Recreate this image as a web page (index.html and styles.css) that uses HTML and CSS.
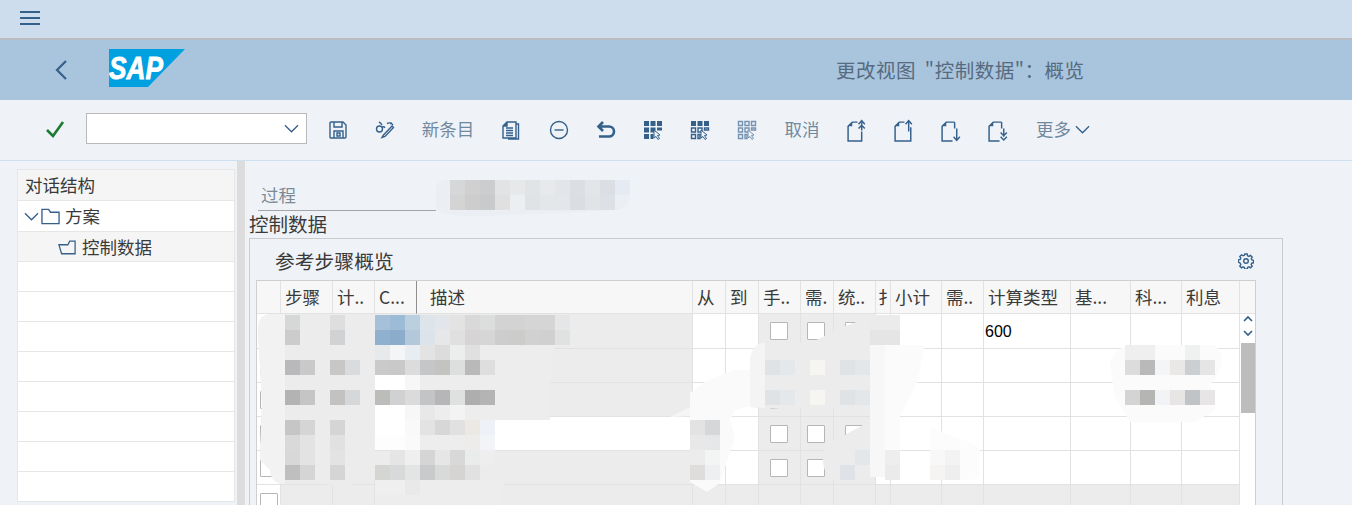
FILE: index.html
```html
<!DOCTYPE html>
<html lang="zh-CN">
<head>
    <meta charset="UTF-8">
    <meta name="viewport" content="width=device-width, initial-scale=1.0">
    <title>更改视图</title>
    <link rel="stylesheet" href="styles.css">
</head>
<body>
    <div class="topbar">
        <svg class="menu-icon" viewBox="0 0 20 14"><path d="M0 1h20M0 7h20M0 13h20"/></svg>
    </div>

    <div class="shell">
        <svg class="back-icon" viewBox="0 0 12 20"><path d="M11 1L2 10l9 9"/></svg>
        <svg class="sap-logo" viewBox="0 0 76 38">
            <polygon points="0,0 76,0 39,38 0,38"/>
            <text x="0" y="30" textLength="54" lengthAdjust="spacingAndGlyphs">SAP</text>
        </svg>
        <div class="shell-title">更改视图 "控制数据"：概览</div>
    </div>

    <div class="toolbar">
        <svg class="check-icon" viewBox="0 0 20 18"><path d="M2 9l6 6L18 1"/></svg>
        <div class="cmd-box">
            <svg class="chevron" viewBox="0 0 16 9"><path d="M1 1l7 7 7-7"/></svg>
        </div>
        <div class="tools">
            <span class="tool"><svg viewBox="0 0 20 20"><path d="M3 2h12l3 3v12a1 1 0 0 1-1 1H3a1 1 0 0 1-1-1V3a1 1 0 0 1 1-1zM6 2v5h8V2M6 18v-7h9v7M9 13h3v3H9z"/></svg></span>
            <span class="tool"><svg viewBox="0 0 20 20"><circle cx="4.5" cy="9" r="3"/><path d="M7 7.5c1-1 2-1 3 .2M7 5C6 3 5 2.500 4 2M8.500 15L17 6l1.500 1.500-8.500 9-3 1zM15 4l1-1 2 2M12 3.500c2-1 3-1 5 0"/></svg></span>
            <span class="tool tool-text wide">新条目</span>
            <span class="tool"><svg viewBox="0 0 20 20"><path d="M1 6l4-4h9v16H1zM1 6h4V2M4 8h7M4 10.500h7M4 13h7M4 15.500h7M14 4h2.500v15H6"/><path class="solid" d="M1 6l4-4v4z"/></svg></span>
            <span class="tool"><svg viewBox="0 0 20 20"><circle cx="10" cy="10" r="8.500"/><path d="M5.500 10h9"/></svg></span>
            <span class="tool"><svg viewBox="0 0 20 20"><path class="thick" d="M7 2L2.500 6.500 7 11M3 6.500h10a4.500 4.500 0 0 1 0 10H3"/></svg></span>
            <span class="tool"><svg viewBox="0 0 20 20">
                <path class="solid" d="M1 1h5v5H1zM7.500 1h5v5h-5zM14 1h5v5h-5zM1 7.500h5v5H1zM7.500 7.500h5v5h-5zM14 7.500h5v3h-5zM1 14h5v5H1zM7.500 14h3v5h-3z"/>
                <path class="cursor" d="M11 10l6 5-2.500.5 2 3-1.500 1-2-3-2 1.500z"/>
            </svg></span>
            <span class="tool"><svg viewBox="0 0 20 20">
                <path class="solid" d="M1 1h5v5H1zM7.500 1h5v5h-5zM14 1h5v5h-5z"/>
                <path d="M1.500 8h4v4h-4zM8 8h4v4H8zM14.500 8h4v2h-4zM1.500 14.500h4v4h-4zM8 14.500h2v4H8z"/>
                <path class="cursor" d="M11 10l6 5-2.500.5 2 3-1.500 1-2-3-2 1.500z"/>
            </svg></span>
            <span class="tool faint"><svg viewBox="0 0 20 20">
                <path d="M1.500 1.500h4v4h-4zM8 1.500h4v4H8zM14.500 1.500h4v4h-4zM1.500 8h4v4h-4zM8 8h4v4H8zM14.500 8h4v2h-4zM1.500 14.500h4v4h-4zM8 14.500h2v4H8z"/>
                <path class="cursor" d="M11 10l6 5-2.500.5 2 3-1.500 1-2-3-2 1.500z"/>
            </svg></span>
            <span class="tool tool-text">取消</span>
            <span class="tool"><svg class="page" viewBox="0 0 22 22"><path d="M11 3H6L2 7v14h13v-9"/><path class="solid" d="M2 7l4-4v4z"/><path d="M15 11V3M12 5l3-3.500L18 5M12 9l3-3 3 3"/></svg></span>
            <span class="tool"><svg class="page" viewBox="0 0 22 22"><path d="M11 3H6L2 7v14h15V8"/><path class="solid" d="M2 7l4-4v4z"/><path d="M15 12V2M12 5l3-3.500L18 5"/></svg></span>
            <span class="tool"><svg class="page" viewBox="0 0 22 22"><path d="M14 3H6L2 7v14h10M14 3v6"/><path class="solid" d="M2 7l4-4v4z"/><path d="M16 9v11M13 17l3 3.500 3-3.500"/></svg></span>
            <span class="tool"><svg class="page" viewBox="0 0 22 22"><path d="M14 3H6L2 7v14h10M14 3v6"/><path class="solid" d="M2 7l4-4v4z"/><path d="M16 9v8M13 13l3 3 3-3M13 17l3 3 3-3"/></svg></span>
            <span class="tool-more">更多<svg class="chevron" viewBox="0 0 16 9"><path d="M1 1l7 7 7-7"/></svg></span>
        </div>
    </div>

    <div class="main">
        <div class="nav">
            <div class="nav-panel">
                <div class="nav-head">对话结构</div>
                <div class="nav-row first">
                    <svg class="tree-arrow" viewBox="0 0 16 9"><path d="M1 1l7 7 7-7"/></svg>
                    <svg class="tree-folder" viewBox="0 0 20 17"><path d="M1 1h7l2 3h9v12H1z"/></svg>
                    <span>方案</span>
                </div>
                <div class="nav-row selected">
                    <svg class="tree-open" viewBox="0 0 20 17"><path d="M1 6h10l2-4h6v14H4zM19 2v14"/></svg>
                    <span>控制数据</span>
                </div>
                <div class="nav-row"></div>
                <div class="nav-row"></div>
                <div class="nav-row"></div>
                <div class="nav-row"></div>
                <div class="nav-row"></div>
                <div class="nav-row"></div>
                <div class="nav-row"></div>
                <div class="nav-row"></div>
            </div>
        </div>
        <div class="splitter"></div>
        <div class="content">
            <div class="process-row">
                <div class="process-label">过程</div>
            </div>
            <div class="section-title">控制数据</div>
            <div class="panel">
                <div class="panel-head">
                    <span>参考步骤概览</span>
                    <svg class="gear" viewBox="0 0 16 16"><path d="M6.800 1h2.400l.4 1.800 1.300.6 1.600-1 1.700 1.700-1 1.600.6 1.300 1.800.4v2.400l-1.800.4-.6 1.300 1 1.600-1.700 1.700-1.600-1-1.300.6-.4 1.800H6.800l-.4-1.800-1.300-.6-1.600 1-1.700-1.700 1-1.600-.6-1.300L.4 9.200V6.800l1.800-.4.6-1.300-1-1.600 1.700-1.700 1.600 1 1.300-.6z"/><circle cx="8" cy="8" r="2.300"/></svg>
                </div>
                <div class="grid-wrap">
                    <table class="grid">
                        <colgroup>
                            <col class="c-sel"><col class="c52"><col class="c42"><col class="c42"><col class="c276">
                            <col class="c33"><col class="c33"><col class="c42"><col class="c33"><col class="c42">
                            <col class="c15"><col class="c51"><col class="c42"><col class="c87"><col class="c60">
                            <col class="c51"><col class="c58">
                        </colgroup>
                        <thead>
                            <tr>
                                <th></th><th>步骤</th><th>计..</th><th class="fixed-edge">C...</th><th class="pad">描述</th>
                                <th>从</th><th>到</th><th>手..</th><th>需.</th><th>统..</th>
                                <th class="clip">扌</th><th>小计</th><th>需..</th><th>计算类型</th><th>基...</th>
                                <th>科...</th><th>利息</th>
                            </tr>
                        </thead>
                        <tbody>
                            <tr>
                                <td class="sel"></td><td class="ro"></td><td class="ro"></td><td class="ro"></td><td class="ro"></td>
                                <td></td><td></td><td class="ro"><i class="box"></i></td><td class="ro"><i class="box narrow"></i></td><td class="ro"><i class="box"></i></td>
                                <td></td><td></td><td></td><td class="num">600</td><td></td><td></td><td></td>
                            </tr>
                            <tr>
                                <td class="sel"><i class="box"></i></td><td class="ro"></td><td class="ro"></td><td class="ro"></td><td class="ro"></td>
                                <td></td><td></td><td class="ro"><i class="box"></i></td><td class="ro"><i class="box narrow"></i></td><td class="ro"><i class="box"></i></td>
                                <td></td><td></td><td></td><td></td><td></td><td></td><td></td>
                            </tr>
                            <tr>
                                <td class="sel"><i class="box"></i></td><td class="ro"></td><td class="ro"></td><td class="ro"></td><td class="ro"></td>
                                <td></td><td></td><td class="ro"><i class="box"></i></td><td class="ro"><i class="box narrow"></i></td><td class="ro"><i class="box"></i></td>
                                <td></td><td></td><td></td><td></td><td></td><td></td><td></td>
                            </tr>
                            <tr>
                                <td class="sel"><i class="box"></i></td><td class="ro"></td><td class="ro"></td><td class="ro"></td><td></td>
                                <td></td><td></td><td class="ro"><i class="box"></i></td><td class="ro"><i class="box narrow"></i></td><td class="ro"><i class="box"></i></td>
                                <td></td><td></td><td></td><td></td><td></td><td></td><td></td>
                            </tr>
                            <tr>
                                <td class="sel"><i class="box"></i></td><td class="ro"></td><td class="ro"></td><td class="ro"></td><td class="ro"></td>
                                <td></td><td></td><td class="ro"><i class="box"></i></td><td class="ro"><i class="box narrow"></i></td><td class="ro"><i class="box"></i></td>
                                <td></td><td></td><td></td><td></td><td></td><td></td><td></td>
                            </tr>
                            <tr>
                                <td class="sel"><i class="box"></i></td><td class="ro"></td><td class="ro"></td><td class="ro"></td><td class="ro"></td>
                                <td class="ro"></td><td class="ro"></td><td class="ro"></td><td class="ro"></td><td class="ro"></td>
                                <td class="ro"></td><td class="ro"></td><td class="ro"></td><td class="ro"></td><td class="ro"></td><td class="ro"></td><td class="ro"></td>
                            </tr>
                        </tbody>
                    </table>
                    <div class="scroll">
                        <div class="scroll-head"></div>
                        <svg class="scroll-arrows" viewBox="0 0 12 24"><path d="M2 6l4-4 4 4M2 16l4 4 4-4"/></svg>
                        <div class="scroll-thumb"></div>
                    </div>
                </div>
            </div>
        </div>
    </div>

    <!-- redacted (mosaic) areas lying over the page -->
    <svg class="mosaic" viewBox="0 0 1352 505">
        <path fill="#ebeff3" d="M436 190q0-10 10-10h170q14 0 14 14t-14 16l-40 2-90 4q-50 2-50-10z"/>
        <path fill="#ececec" d="M258 330q0-16 14-16h103v166l-30 6-65-6q-10-4-10-14l-10-10 2-55z"/>
        <path fill="#f2f2f2" d="M258 330q0-16 14-16h13v170h-5q-10-4-10-14l-10-10 2-55z"/>
        <path fill="#ededed" d="M375 480h130l-6 25H375z"/>
        <path fill="#ededed" d="M420 345h135l-5 30v45h-130z"/>
        <path fill="#f5f5f5" d="M670 417l20-10v9z"/>
        <path fill="#fafafa" d="M690 393l15-11 28-12h19v35l-17 5-5 10 5 17-15 46-13 9-17-10z"/>
        <path fill="#ececec" d="M750 360q2-17 25-17h35l17-8 16-8 27-10v92H780l-30-2z"/>
        <path fill="#f4f4f4" d="M750 360q2-17 15-17v65l-15-1z"/>
        <path fill="#ececec" d="M823 460q0-20 22-25l25-14v55l-30 5q-17-3-17-21z"/>
        <path fill="#ececec" d="M870 315h30v30h-30z"/>
        <path fill="#f7f7f7" d="M870 345h15v132h-15z"/>
        <path fill="#fbfbfb" d="M885 345h40l-8 38-17 34v60h-15z"/>
        <path fill="#fcfcfc" d="M930 427l15 6 25 9 10 8v28l-10 2h-40z"/>
        <path fill="#fbfbfb" d="M1110 365q5-20 25-20h80q10 10 5 25l-10 15 5 25-20 12h-65l-15-25z"/>

        <g class="tile-row">
            <rect x="285" y="315" fill="#d6d8d7"/><rect x="330" y="315" fill="#dedede"/><rect x="375" y="315" fill="#a7c0da"/><rect x="390" y="315" fill="#9cbbd6"/><rect x="405" y="315" fill="#bccfde"/><rect x="420" y="315" fill="#dde4ea"/><rect x="435" y="315" fill="#e2e6ea"/><rect x="450" y="315" fill="#e3e3e3"/><rect x="465" y="315" fill="#d9d9d9"/><rect x="480" y="315" fill="#dcdddd"/><rect x="495" y="315" fill="#d3d3d3"/><rect x="510" y="315" fill="#d3d3d3"/><rect x="525" y="315" fill="#d5d5d5"/><rect x="540" y="315" fill="#d5d5d5"/><rect x="555" y="315" fill="#e4e6e8"/>
            <rect x="285" y="330" fill="#cbcccb"/><rect x="330" y="330" fill="#d1d2d4"/><rect x="375" y="330" fill="#8fb0cf"/><rect x="390" y="330" fill="#8bacca"/><rect x="405" y="330" fill="#b3c8db"/><rect x="420" y="330" fill="#dce3ea"/><rect x="435" y="330" fill="#e6e7e8"/><rect x="450" y="330" fill="#e0e0e0"/><rect x="465" y="330" fill="#d6d4d4"/><rect x="480" y="330" fill="#d6d6d6"/><rect x="495" y="330" fill="#cdcdcd"/><rect x="510" y="330" fill="#cccccb"/><rect x="525" y="330" fill="#d1d1d1"/><rect x="540" y="330" fill="#d0d0d0"/><rect x="555" y="330" fill="#e0e2e2"/>
            <rect x="375" y="345" fill="#e8e9ea"/><rect x="390" y="345" fill="#f3f5f6"/><rect x="405" y="345" fill="#e8edf1"/><rect x="420" y="345" fill="#e3e3e3"/><rect x="435" y="345" fill="#dcdcdc"/><rect x="450" y="345" fill="#eceeee"/><rect x="465" y="345" fill="#e0e0e0"/>
            <rect x="285" y="360" fill="#b9b9bb"/><rect x="300" y="360" fill="#c9c9c9"/><rect x="330" y="360" fill="#c8c7c5"/><rect x="345" y="360" fill="#dadbdc"/><rect x="375" y="360" fill="#cacaca"/><rect x="390" y="360" fill="#c8c9c8"/><rect x="405" y="360" fill="#dcdcdc"/><rect x="420" y="360" fill="#c5c6c7"/><rect x="435" y="360" fill="#c3c3c1"/><rect x="450" y="360" fill="#dddfde"/><rect x="465" y="360" fill="#b9b9b9"/><rect x="480" y="360" fill="#dedede"/>
            <rect x="375" y="375" fill="#ffffff"/><rect x="390" y="375" fill="#ffffff"/><rect x="405" y="375" fill="#f7f7f7"/>
            <rect x="285" y="390" fill="#b3b3b3"/><rect x="300" y="390" fill="#c5c5c5"/><rect x="330" y="390" fill="#c3c2c0"/><rect x="345" y="390" fill="#d6d7d9"/><rect x="375" y="390" fill="#bcbcba"/><rect x="390" y="390" fill="#d0d1d3"/><rect x="405" y="390" fill="#dbdbdb"/><rect x="420" y="390" fill="#c3c4c6"/><rect x="435" y="390" fill="#b6b6b8"/><rect x="450" y="390" fill="#dfe1e0"/><rect x="465" y="390" fill="#aeaeae"/><rect x="480" y="390" fill="#b4b4b4"/>
            <rect x="375" y="405" fill="#ffffff"/><rect x="390" y="405" fill="#ffffff"/><rect x="405" y="405" fill="#f7f7f7"/><rect x="420" y="405" fill="#e8e8e8"/><rect x="450" y="405" fill="#f3f3f3"/>
            <rect x="285" y="420" fill="#c6c6c6"/><rect x="300" y="420" fill="#d5d5d5"/><rect x="330" y="420" fill="#d5d5d5"/><rect x="375" y="420" fill="#ffffff"/><rect x="390" y="420" fill="#ffffff"/><rect x="405" y="420" fill="#f9f9f9"/><rect x="420" y="420" fill="#e3e3e3"/><rect x="435" y="420" fill="#d7d7d7"/><rect x="450" y="420" fill="#e1e1e1"/><rect x="465" y="420" fill="#ece9e4"/><rect x="480" y="420" fill="#eef1f7"/>
            <rect x="285" y="435" fill="#d9d9d9"/><rect x="300" y="435" fill="#e3e3e3"/><rect x="330" y="435" fill="#e1e1e1"/><rect x="375" y="435" fill="#fdfdfd"/><rect x="390" y="435" fill="#fdfdfd"/><rect x="405" y="435" fill="#fafafa"/><rect x="420" y="435" fill="#ededed"/><rect x="435" y="435" fill="#ededed"/><rect x="450" y="435" fill="#ededed"/><rect x="465" y="435" fill="#eeecea"/><rect x="480" y="435" fill="#f3f4f7"/>
            <rect x="285" y="450" fill="#d8d8d8"/><rect x="300" y="450" fill="#e3e3e3"/><rect x="330" y="450" fill="#e3e3e3"/><rect x="390" y="450" fill="#e5e5e5"/><rect x="405" y="450" fill="#efefef"/><rect x="420" y="450" fill="#d5d5d5"/><rect x="435" y="450" fill="#e6e6e6"/><rect x="450" y="450" fill="#d8d8d8"/><rect x="465" y="450" fill="#eaecec"/><rect x="480" y="450" fill="#eeeeee"/>
            <rect x="285" y="465" fill="#bfbfbf"/><rect x="300" y="465" fill="#d5d5d5"/><rect x="330" y="465" fill="#d5d5d5"/><rect x="375" y="465" fill="#d5d5d3"/><rect x="390" y="465" fill="#d8d9db"/><rect x="405" y="465" fill="#e3e5e4"/><rect x="420" y="465" fill="#c8cacc"/><rect x="435" y="465" fill="#d8dad9"/><rect x="450" y="465" fill="#d6d4d2"/><rect x="465" y="465" fill="#e1e1e1"/>
            <rect x="375" y="480" fill="#efefef"/><rect x="390" y="480" fill="#efefef"/><rect x="405" y="480" fill="#e9e9e9"/>

            <rect x="450" y="180" fill="#d6d7d8"/><rect x="465" y="180" fill="#d0d0d0"/><rect x="480" y="180" fill="#cccdcf"/><rect x="495" y="180" fill="#e2e3e4"/><rect x="510" y="180" fill="#e6e8ea"/><rect x="525" y="180" fill="#e1e4e7"/><rect x="540" y="180" fill="#e7e9ec"/><rect x="555" y="180" fill="#e3e6e9"/><rect x="570" y="180" fill="#dbdee2"/><rect x="585" y="180" fill="#e3e6e8"/><rect x="600" y="180" fill="#dbdee2"/><rect x="615" y="180" fill="#e6eaf2"/>
            <rect x="450" y="195" fill="#d4d4d4"/><rect x="465" y="195" fill="#cdcdcd"/><rect x="480" y="195" fill="#c9cacc"/><rect x="495" y="195" fill="#e0e0e1"/><rect x="510" y="195" fill="#eceff2"/><rect x="525" y="195" fill="#e0e3e5"/><rect x="540" y="195" fill="#e4e7e9"/><rect x="555" y="195" fill="#e4e7e9"/><rect x="570" y="195" fill="#dadde1"/><rect x="585" y="195" fill="#e1e4e7"/><rect x="600" y="195" fill="#dde0e4"/>

            <rect x="690" y="420" fill="#e3e3e3"/><rect x="705" y="420" fill="#d6d7d8"/><rect x="690" y="435" fill="#e8e8e8"/><rect x="705" y="435" fill="#e6e7e8"/><rect x="690" y="450" fill="#ececec"/><rect x="705" y="450" fill="#f3f5f5"/><rect x="690" y="465" fill="#dedddb"/><rect x="705" y="465" fill="#edeff1"/>
            <rect x="765" y="360" fill="#dfe3e6"/><rect x="780" y="360" fill="#e4e8eb"/><rect x="810" y="360" fill="#f6f5f2"/><rect x="840" y="360" fill="#dfe3e6"/><rect x="855" y="360" fill="#e3e7ea"/>
            <rect x="765" y="390" fill="#dfe3e6"/><rect x="780" y="390" fill="#e4e8eb"/><rect x="810" y="390" fill="#f6f5f2"/><rect x="840" y="390" fill="#dfe3e6"/><rect x="855" y="390" fill="#e3e7ea"/>
            <rect x="870" y="315" fill="#ebebeb"/><rect x="885" y="315" fill="#ebebeb"/><rect x="870" y="330" fill="#e5e5e5"/><rect x="885" y="330" fill="#e5e5e5"/>
            <rect x="855" y="450" fill="#e3e7e9"/><rect x="840" y="465" fill="#dfe3e8"/><rect x="885" y="450" fill="#eeeeee"/><rect x="885" y="465" fill="#ebebeb"/>
            <rect x="930" y="465" fill="#f5f4f2"/><rect x="945" y="465" fill="#eeeeee"/><rect x="930" y="450" fill="#f8f8f8"/><rect x="945" y="450" fill="#f3f3f3"/>
            <rect x="1125" y="345" fill="#efefef"/><rect x="1140" y="345" fill="#efefef"/><rect x="1185" y="345" fill="#eff0f0"/>
            <rect x="1125" y="360" fill="#dcdcdc"/><rect x="1140" y="360" fill="#b9b9b9"/><rect x="1155" y="360" fill="#f4f5f6"/><rect x="1170" y="360" fill="#e9e8e7"/><rect x="1185" y="360" fill="#cccfd2"/><rect x="1200" y="360" fill="#e5e5e5"/>
            <rect x="1125" y="390" fill="#d4d4d4"/><rect x="1140" y="390" fill="#b5b5b3"/><rect x="1155" y="390" fill="#f1f3f6"/><rect x="1170" y="390" fill="#e7e6e5"/><rect x="1185" y="390" fill="#c1c4c7"/><rect x="1200" y="390" fill="#e7e5e5"/>
        </g>
    </svg>
</body>
</html>
```

FILE: styles.css
```css
html, body {
    margin: 0;
    height: 505px;
    overflow: hidden;
}
body {
    position: relative;
    font-family: "Noto Sans CJK SC", "Liberation Sans", sans-serif;
    font-size: 17.5px;
    color: #3a3a3a;
    background: #eff3f8;
}
svg {
    display: block;
    flex: none;
    fill: none;
    stroke: #34608a;
    stroke-width: 1.4;
}

.topbar {
    box-sizing: border-box;
    height: 38px;
    display: flex;
    align-items: center;
    padding: 0 0 2px 20px;
    background: #cddded;
}
.menu-icon {
    width: 20px;
    height: 14px;
    stroke-width: 2.2;
}

.shell {
    height: 60px;
    display: flex;
    align-items: center;
    background: #a9c4dd;
    border-top: 2px solid #b9bdc1;
}
.back-icon {
    width: 12px;
    height: 20px;
    margin-left: 55px;
    stroke-width: 2.2;
}
.sap-logo {
    width: 76px;
    height: 38px;
    margin: 0 0 4px 42px;
    stroke: none;
}
.sap-logo polygon {
    fill: #00a0e1;
}
.sap-logo text {
    font-family: "Liberation Sans", sans-serif;
    font-size: 31px;
    font-weight: bold;
    font-style: italic;
    fill: #fff;
    stroke: #fff;
    stroke-width: 0.8;
}
.shell-title {
    margin-left: 651px;
    font-size: 19.5px;
    line-height: 26px;
    letter-spacing: 0.5px;
    word-spacing: 4px;
    color: #566b80;
}

.toolbar {
    height: 60px;
    display: flex;
    align-items: center;
    border-bottom: 1px solid #cfe0f0;
}
.check-icon {
    width: 20px;
    height: 18px;
    margin-left: 45px;
    stroke: #1c7a33;
    stroke-width: 2.6;
}
.cmd-box {
    width: 219px;
    height: 29px;
    margin: 0 0 4px 21px;
    display: flex;
    align-items: center;
    justify-content: flex-end;
    background: #fff;
    border: 1px solid #b9b9b9;
}
.chevron {
    width: 15px;
    height: 9px;
    margin-right: 7px;
}
.tools {
    display: flex;
    align-items: center;
    margin-left: 7px;
}
.tool {
    width: 47px;
    display: flex;
    justify-content: center;
}
.tool svg {
    width: 20px;
    height: 20px;
}
.tool svg.page {
    width: 23px;
    height: 23px;
}
.tool-text {
    width: 64px;
    padding-bottom: 2px;
    color: #71899f;
    line-height: 24px;
}
.wide {
    width: 80px;
}
.faint svg {
    opacity: 0.65;
}
.solid {
    fill: #34608a;
    stroke: none;
}
.thick {
    stroke-width: 2.6;
}
.cursor {
    fill: #eff3f8;
    stroke-width: 1;
}
.tool-more {
    display: flex;
    align-items: center;
    margin-left: 14px;
    padding-bottom: 2px;
    color: #71899f;
    line-height: 24px;
}
.tool-more .chevron {
    margin-left: 4px;
}

.main {
    display: flex;
}
.nav {
    width: 218px;
    padding: 8px 2px 0 17px;
}
.nav-panel {
    border: 1px solid #e6e6e6;
    border-bottom: none;
    background: #fff;
}
.nav-head, .nav-row {
    height: 29px;
    display: flex;
    align-items: center;
    line-height: 24px;
    border-bottom: 1px solid #e6e6e6;
}
.nav-head {
    height: 30px;
    padding-left: 7px;
    background: #f5f5f5;
}
.first {
    height: 30px;
}
.selected {
    background: #f5f5f5;
}
.tree-arrow {
    width: 15px;
    height: 9px;
    margin-left: 6px;
}
.tree-folder {
    width: 19px;
    height: 17px;
    margin: 0 5px 0 2px;
}
.tree-open {
    width: 18px;
    height: 16px;
    margin: 0 6px 0 40px;
}
.splitter {
    width: 8px;
    height: 344px;
    background: #dcdcdc;
}

.content {
    flex: 1;
    padding-left: 4px;
}
.process-row {
    height: 49px;
    display: flex;
    align-items: flex-end;
    padding-left: 9px;
}
.process-label {
    width: 175px;
    padding: 0 0 3px 3px;
    line-height: 24px;
    color: #7d8a96;
    border-bottom: 1px solid #a6a6a6;
    margin-bottom: -1px;
}
.section-title {
    height: 27px;
    line-height: 25px;
    font-size: 19.5px;
    margin-top: 1px;
}
.panel {
    width: 1032px;
    border: 1px solid #c9cbcd;
}
.panel-head {
    box-sizing: border-box;
    height: 41px;
    display: flex;
    align-items: center;
    justify-content: space-between;
    padding: 2px 28px 0 25px;
    font-size: 19.8px;
}
.gear {
    width: 16px;
    height: 16px;
}
.grid-wrap {
    display: flex;
    width: 998px;
    margin-left: 6px;
    border: 1px solid #cfcfcf;
    background: #fff;
}
.grid {
    width: 983px;
    table-layout: fixed;
    border-collapse: separate;
    border-spacing: 0;
}
.c-sel { width: 24px; }
.c15 { width: 15px; }
.c33 { width: 33px; }
.c42 { width: 42px; }
.c51 { width: 51px; }
.c52 { width: 52px; }
.c58 { width: 58px; }
.c60 { width: 60px; }
.c87 { width: 87px; }
.c276 { width: 276px; }
.grid th, .grid td {
    padding: 0;
    border-right: 1px solid #e2e2e2;
    border-bottom: 1px solid #e2e2e2;
    overflow: hidden;
    white-space: nowrap;
}
.grid th {
    height: 33px;
    padding-left: 4px;
    box-sizing: border-box;
    text-align: left;
    font-weight: normal;
    font-size: 17.5px;
    line-height: 24px;
    background: #f7f7f7;
}
.grid th.pad {
    padding-left: 13px;
    padding-right: 0;
}
.grid th.clip {
    padding-left: 2px;
    letter-spacing: -6px;
}
.grid th.fixed-edge {
    border-right-color: #8e8e8e;
}
.grid td {
    height: 33px;
    vertical-align: middle;
}
.grid td.ro {
    background: #ececec;
}
.box {
    display: block;
    box-sizing: border-box;
    width: 18px;
    height: 18px;
    margin-left: 11px;
    background: #fff;
    border: 1px solid #b6b6b6;
    border-radius: 1px;
}
.box.narrow {
    margin-left: 6px;
}
.sel .box {
    margin-left: 3px;
}
.grid td.num {
    padding: 1px 0 0 1px;
    font-family: "Liberation Sans", sans-serif;
    font-size: 16px;
    color: #000;
}
.scroll {
    position: relative;
    width: 15px;
    flex: none;
}
.scroll-head {
    height: 32px;
    background: #f7f7f7;
    border-bottom: 1px solid #e2e2e2;
}
.scroll-arrows {
    width: 12px;
    height: 24px;
    margin: 1px 0 0 2px;
    stroke-width: 1.7;
}
.scroll-thumb {
    height: 70px;
    margin: 4px 0 0 1px;
    background: #bdbdbd;
}

.mosaic {
    position: absolute;
    left: 0;
    top: 0;
    width: 1352px;
    height: 505px;
    stroke: none;
    pointer-events: none;
}
.tile-row rect {
    width: 15px;
    height: 15px;
}
```
